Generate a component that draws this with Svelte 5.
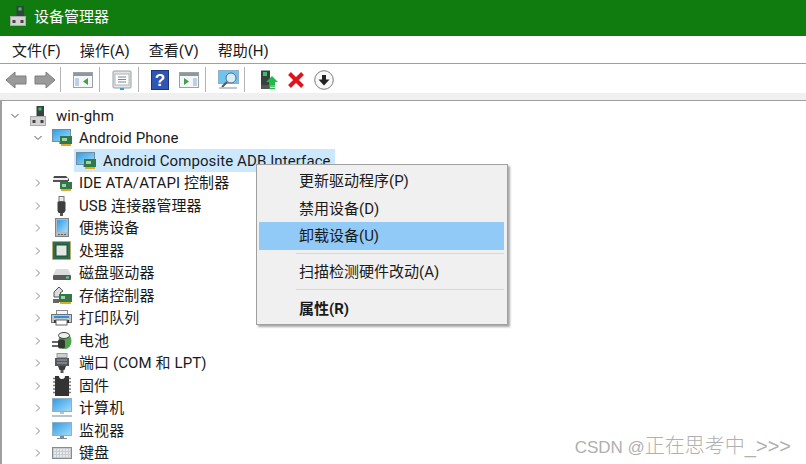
<script lang="ts">
  const menus = ['文件(F)', '操作(A)', '查看(V)', '帮助(H)'];

  // depth: 0 root, 1 category, 2 device
  const rows = [
    { label: 'win-ghm', icon: 'host', depth: 0, open: true },
    { label: 'Android Phone', icon: 'adb', depth: 1, open: true },
    { label: 'Android Composite ADB Interface', icon: 'adb', depth: 2, selected: true },
    { label: 'IDE ATA/ATAPI 控制器', icon: 'ide', depth: 1 },
    { label: 'USB 连接器管理器', icon: 'usb', depth: 1 },
    { label: '便携设备', icon: 'portable', depth: 1 },
    { label: '处理器', icon: 'cpu', depth: 1 },
    { label: '磁盘驱动器', icon: 'disk', depth: 1 },
    { label: '存储控制器', icon: 'storage', depth: 1 },
    { label: '打印队列', icon: 'printer', depth: 1 },
    { label: '电池', icon: 'battery', depth: 1 },
    { label: '端口 (COM 和 LPT)', icon: 'port', depth: 1 },
    { label: '固件', icon: 'firmware', depth: 1 },
    { label: '计算机', icon: 'computer', depth: 1 },
    { label: '监视器', icon: 'monitor', depth: 1 },
    { label: '键盘', icon: 'keyboard', depth: 1 }
  ];
</script>

{#snippet hostShape()}
  <rect x="8.500" y="0" width="7.500" height="10.500" fill="#37433f" />
  <rect x="10.500" y="1.500" width="3" height="3" fill="#36c46b" />
  <rect x="2.500" y="10.500" width="15" height="9" fill="#d4d4d4" stroke="#ababab" />
  <rect x="4.500" y="14" width="3" height="3" fill="#444" />
  <rect x="12.500" y="14" width="3" height="3" fill="#444" />
{/snippet}

{#snippet treeIcon(name)}
  <svg class="ticon" viewBox="0 0 22 20" width="22" height="20">
    <defs>
      <linearGradient id="scr" x1="0" y1="0" x2="1" y2="1">
        <stop offset="0" stop-color="#2f9be8" />
        <stop offset="1" stop-color="#a6dcf8" />
      </linearGradient>
    </defs>
    {#if name === 'host'}
      {@render hostShape()}
    {:else if name === 'adb'}
      <rect x="1.500" y="1.500" width="18" height="12" fill="url(#scr)" stroke="#6f8ea1" />
      <rect x="8" y="14" width="4" height="2" fill="#9aa8b0" />
      <rect x="9" y="8" width="12" height="8" fill="#2f7a4a" />
      <rect x="11" y="10" width="5" height="3" fill="#a6cfa8" />
      <rect x="10" y="16" width="10" height="2" fill="#e0a92e" />
    {:else if name === 'ide'}
      <path d="M3 3h12l3 3v2H2V6z" fill="#4a4a4a" />
      <rect x="2" y="5" width="15" height="2" fill="#ededed" />
      <rect x="2" y="7" width="15" height="2" fill="#555" />
      <rect x="9" y="9" width="12" height="7" fill="#2f7a4a" />
      <rect x="11" y="11" width="4" height="3" fill="#a6cfa8" />
      <rect x="10" y="16" width="10" height="2" fill="#e0a92e" />
    {:else if name === 'usb'}
      <rect x="8" y="0.500" width="5" height="5" fill="#e8e8e8" stroke="#777" />
      <path d="M6.500 6.500q0-1 1-1h6q1 0 1 1v8l-1.500 2.500h-5.500L6.500 14.500z" fill="#3e3e3e" />
      <rect x="9" y="17" width="3" height="3" fill="#555" />
    {:else if name === 'portable'}
      <rect x="4.500" y="0.500" width="13" height="18" fill="#b4bbc0" stroke="#7c858a" />
      <rect x="6" y="2" width="10" height="12" fill="url(#scr)" />
      <path d="M7 16.500h8" stroke="#666" stroke-dasharray="2 1" />
    {:else if name === 'cpu'}
      <rect x="1.500" y="0.500" width="18" height="18" fill="#2e6b4c" stroke="#d2a53a" stroke-dasharray="1 1" />
      <rect x="5" y="4" width="11" height="11" fill="#e2e7e2" stroke="#1f4d36" />
    {:else if name === 'disk'}
      <path d="M5 6h12l3 6H2z" fill="#dcdcdc" />
      <rect x="2" y="12" width="18" height="5" rx="1" fill="#595959" />
      <rect x="15" y="13.500" width="3" height="2" fill="#55d27a" />
    {:else if name === 'storage'}
      <path d="M3 6l5-5 4 4-3 2 2 2-3 2H3z" fill="#dcdcdc" stroke="#555" />
      <rect x="8" y="8" width="13" height="8" fill="#2f7a4a" />
      <rect x="10" y="10" width="4" height="3" fill="#a6cfa8" />
      <rect x="9" y="16" width="11" height="2" fill="#e0a92e" />
      <rect x="2" y="13" width="6" height="4" fill="#666" />
    {:else if name === 'printer'}
      <rect x="5.500" y="2.500" width="11" height="4" fill="#f2f5f7" stroke="#8a8a8a" />
      <rect x="0.500" y="6.500" width="20" height="8" fill="#c2c7cb" stroke="#6c7277" />
      <rect x="3" y="8" width="15" height="2" fill="#2f8fd8" />
      <rect x="3" y="12" width="15" height="3" fill="#333" />
      <rect x="5" y="12" width="11" height="5" fill="#fff" stroke="#666" />
    {:else if name === 'battery'}
      <ellipse cx="14" cy="10" rx="6.500" ry="8" fill="#4fa34b" />
      <ellipse cx="13" cy="4.500" rx="5.500" ry="3" fill="#eef2ec" stroke="#444" />
      <path d="M1 11h7M1 15h7" stroke="#333" stroke-width="1.500" />
      <rect x="7" y="8.500" width="7" height="9" rx="2" fill="#333" />
    {:else if name === 'port'}
      <rect x="6" y="0.500" width="10" height="4" fill="#cfcfcf" stroke="#999" />
      <rect x="4" y="5" width="14" height="8" fill="#55595c" />
      <path d="M6 7h10M6 10h10" stroke="#a5a9ac" />
      <path d="M7 13h8l-1.500 4h-5z" fill="#3d3d3d" />
      <rect x="9.500" y="17" width="3" height="3" fill="#555" />
    {:else if name === 'firmware'}
      <path d="M4 0h4a3 3 0 0 0 6 0h4v20H4z" fill="#333" />
      <path d="M2 2.500h2M2 6h2M2 9.500h2M2 13h2M2 16.500h2M18 2.500h2M18 6h2M18 9.500h2M18 13h2M18 16.500h2" stroke="#777" stroke-width="1.500" />
    {:else if name === 'computer'}
      <rect x="1.500" y="0.500" width="19" height="13" fill="url(#scr)" stroke="#8eb1c5" />
      <rect x="9" y="14" width="4" height="2" fill="#b9c4cb" />
      <rect x="1" y="17" width="20" height="2" fill="#b9c4cb" />
    {:else if name === 'monitor'}
      <rect x="1.500" y="1.500" width="19" height="13" fill="url(#scr)" stroke="#8eb1c5" />
      <rect x="9" y="15" width="4" height="2" fill="#7b8c96" />
      <rect x="6" y="17" width="10" height="1" fill="#7b8c96" />
    {:else if name === 'keyboard'}
      <rect x="1.500" y="4.500" width="19" height="11" fill="#c8ccd0" stroke="#868b90" />
      <path d="M3 7h16M3 10h16M3 13h16" stroke="#f2f2f2" stroke-width="1.500" stroke-dasharray="2 1" />
    {/if}
  </svg>
{/snippet}

<div class="window">
  <header class="titlebar">
    <svg class="titleicon" viewBox="0 0 20 20" width="20" height="20">
      {@render hostShape()}
    </svg>
    <span>设备管理器</span>
  </header>

  <nav class="menubar">
    {#each menus as m}
      <span>{m}</span>
    {/each}
  </nav>

  <div class="toolbar">
    <svg class="tb" viewBox="0 0 22 18" width="22" height="18"><path d="M1 9l9-8v4h11v8H10v4z" fill="#9a9a9a" stroke="#7d7d7d" /></svg>
    <svg class="tb fwd" viewBox="0 0 22 18" width="22" height="18"><path d="M21 9l-9-8v4H1v8h11v4z" fill="#9a9a9a" stroke="#7d7d7d" /></svg>
    <i class="sep first"></i>
    <svg class="tb" viewBox="0 0 20 18" width="20" height="18">
      <rect x="0.500" y="1.500" width="19" height="15" fill="#f4f6f7" stroke="#9aa3a8" />
      <rect x="1" y="2" width="18" height="3" fill="#8f979c" />
      <rect x="2" y="7" width="4" height="8" fill="#bcd2e4" />
      <path d="M15 7v7l-5-3.500z" fill="#3fa14a" />
    </svg>
    <i class="sep"></i>
    <svg class="tb" viewBox="0 0 20 20" width="20" height="20">
      <rect x="1" y="1" width="18" height="17" rx="1" fill="#e3e5e6" stroke="#9a9fa3" />
      <rect x="3" y="4" width="14" height="11" fill="#fdfdfd" stroke="#b0b5b8" />
      <path d="M6 7h8M6 9.500h8M6 12h8" stroke="#7d8a94" />
      <rect x="8" y="18" width="4" height="2" fill="#2f9be0" />
    </svg>
    <i class="sep"></i>
    <svg class="tb" viewBox="0 0 18 20" width="18" height="20">
      <rect x="0.500" y="0.500" width="17" height="19" fill="#2f55b5" stroke="#1d357c" />
      <text x="9" y="15.500" text-anchor="middle" class="q">?</text>
    </svg>
    <svg class="tb gap" viewBox="0 0 20 18" width="20" height="18">
      <rect x="0.500" y="1.500" width="19" height="15" fill="#f4f6f7" stroke="#9aa3a8" />
      <rect x="1" y="2" width="18" height="3" fill="#8f979c" />
      <rect x="14" y="7" width="4" height="8" fill="#bcd2e4" />
      <path d="M5 7v7l5-3.500z" fill="#3fa14a" />
    </svg>
    <i class="sep"></i>
    <svg class="tb" viewBox="0 0 21 20" width="21" height="20">
      <rect x="0.500" y="0.500" width="20" height="13" fill="#6ec3f2" stroke="#8eb1c5" />
      <circle cx="13" cy="8" r="5" fill="#d5eefb" stroke="#667" />
      <path d="M9 12l-5 5" stroke="#555" stroke-width="2" />
      <path d="M1 18h18" stroke="#a8b4bb" stroke-width="1.500" />
    </svg>
    <i class="sep last"></i>
    <svg class="tb" viewBox="0 0 18 20" width="18" height="20">
      <rect x="1" y="0.500" width="9" height="15" fill="#37423f" />
      <rect x="3" y="2" width="4" height="4" fill="#36c46b" />
      <rect x="1" y="15" width="9" height="4" fill="#555" />
      <path d="M12 6l6 6h-3v3H9v-3H6z" fill="#22b84a" />
      <path d="M9 16h6M9 18.500h6" stroke="#22b84a" stroke-width="1.500" />
    </svg>
    <svg class="tb x" viewBox="0 0 18 18" width="18" height="18"><path d="M2.500 2.500l13 13M15.500 2.500l-13 13" stroke="#e1141e" stroke-width="4" /></svg>
    <svg class="tb dl" viewBox="0 0 20 20" width="20" height="20">
      <circle cx="10" cy="10" r="9.300" fill="#f8f8f8" stroke="#7c7c7c" />
      <path d="M10 15.500l-5.500-6H8V5h4v4.500h3.500z" fill="#222" />
    </svg>
  </div>

  <div class="band"></div>

  <main class="tree">
    {#each rows as row}
      <div class="row" class:d0={row.depth === 0} class:d2={row.depth === 2}>
        <span class="twisty">
          {#if row.depth < 2}
            <svg viewBox="0 0 8 8" width="8" height="8">
              {#if row.open}
                <path d="M0.500 2l3.500 3.500L7.500 2" class="chev open" />
              {:else}
                <path d="M2 0.500L5.500 4 2 7.500" class="chev" />
              {/if}
            </svg>
          {/if}
        </span>
        <span class="entry" class:selected={row.selected}>
          {@render treeIcon(row.icon)}
          <span class="label">{row.label}</span>
        </span>
      </div>
    {/each}
  </main>

  <div class="context">
    <div class="item">更新驱动程序(P)</div>
    <div class="item">禁用设备(D)</div>
    <div class="item active">卸载设备(U)</div>
    <div class="divider"></div>
    <div class="item">扫描检测硬件改动(A)</div>
    <div class="divider wide"></div>
    <div class="item bold">属性(R)</div>
  </div>

  <div class="watermark"><span class="lead">CSDN @</span>正在思考中_&gt;&gt;&gt;</div>
</div>

<style>
  :global(body) {
    margin: 0;
    background: #fff;
  }

  .window {
    position: relative;
    width: 806px;
    height: 464px;
    overflow: hidden;
    font-family: Roboto, 'Noto Sans CJK SC', sans-serif;
    font-size: 15px;
    color: #1a1a1a;
  }

  .titlebar {
    height: 36px;
    background: #107c10;
    color: #fff;
    display: flex;
    align-items: center;
    gap: 6px;
    padding: 0 0 5px 8px;
    box-sizing: border-box;
  }

  .menubar {
    height: 27px;
    display: flex;
    align-items: center;
    gap: 19px;
    padding-left: 12px;
  }

  .toolbar {
    height: 27px;
    border-top: 1px solid #a0a0a0;
    display: flex;
    align-items: center;
    padding: 2px 0 0 5px;
  }

  .tb {
    flex: none;
  }

  .fwd {
    margin-left: 7px;
  }

  .gap {
    margin-left: 10px;
  }

  .x {
    margin-left: 9px;
  }

  .dl {
    margin-left: 9px;
  }

  .sep {
    flex: none;
    width: 1px;
    height: 25px;
    background: #b4b4b4;
    margin: 0 12px 0 6px;
  }

  .sep.first {
    margin-left: 4px;
  }

  .sep.last {
    margin-left: 5px;
    margin-right: 15px;
  }

  .q {
    font-family: 'Liberation Sans', sans-serif;
    font-size: 17px;
    font-weight: bold;
    fill: #fff;
  }

  .band {
    height: 7px;
    background: #f0f0f0;
  }

  .tree {
    height: 364px;
    box-sizing: border-box;
    border-top: 1px solid #a0a0a0;
    border-left: 2px solid #a0a0a0;
    padding-top: 3.500px;
  }

  .row {
    height: 22.5px;
    display: flex;
    align-items: center;
    padding-left: 32px;
  }

  .row.d0 {
    padding-left: 9px;
  }

  .row.d2 {
    padding-left: 56px;
  }

  .twisty {
    width: 8px;
    height: 8px;
    margin-right: 9px;
    display: flex;
  }

  .chev {
    fill: none;
    stroke: #8a8a8a;
    stroke-width: 1;
  }

  .chev.open {
    stroke: #555;
  }

  .entry {
    display: flex;
    align-items: center;
    height: 23px;
  }

  .entry.selected {
    background: #cce8ff;
    margin-left: -1px;
    padding: 0 0 0 1px;
  }

  .ticon {
    flex: none;
    margin-right: 5px;
  }

  .label {
    line-height: 22px;
    padding: 0 4px 0 1px;
    letter-spacing: 0.1px;
    white-space: nowrap;
  }

  .context {
    position: absolute;
    left: 256px;
    top: 164px;
    width: 252px;
    height: 161px;
    box-sizing: border-box;
    background: #f0f0f0;
    border: 1px solid #a0a0a0;
    box-shadow: 2px 2px 2px rgba(0, 0, 0, 0.35);
    padding: 2px 3px 3px 2px;
  }

  .item {
    height: 27.500px;
    line-height: 29px;
    padding-left: 40px;
  }

  .item.active {
    background: #91c9f7;
  }

  .item.bold {
    font-weight: 700;
  }

  .divider {
    height: 1px;
    margin: 3.500px 0 3.500px 37px;
    background: #d7d7d7;
  }

  .divider.wide {
    margin-bottom: 5.500px;
  }

  .watermark {
    position: absolute;
    right: 15px;
    bottom: 5px;
    font-family: 'Liberation Sans', 'Noto Sans CJK SC', sans-serif;
    font-size: 20px;
    font-weight: 300;
    color: #b0b0b0;
  }

  .lead {
    font-size: 17px;
  }
</style>
